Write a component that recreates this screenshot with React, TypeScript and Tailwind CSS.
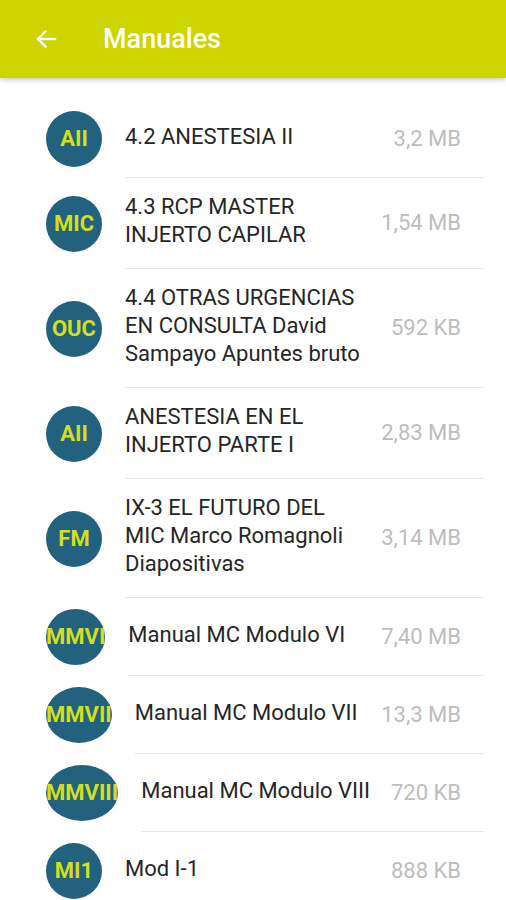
import React from "react";

type Manual = {
  initials: string;
  title: string;
  size: string;
};

const MANUALS: Manual[] = [
  { initials: "AII", title: "4.2 ANESTESIA II", size: "3,2 MB" },
  { initials: "MIC", title: "4.3 RCP MASTER INJERTO CAPILAR", size: "1,54 MB" },
  { initials: "OUC", title: "4.4 OTRAS URGENCIAS EN CONSULTA David Sampayo Apuntes bruto", size: "592 KB" },
  { initials: "AII", title: "ANESTESIA EN EL INJERTO PARTE I", size: "2,83 MB" },
  { initials: "FM", title: "IX-3 EL FUTURO DEL MIC Marco Romagnoli Diapositivas", size: "3,14 MB" },
  { initials: "MMVI", title: "Manual MC Modulo VI", size: "7,40 MB" },
  { initials: "MMVII", title: "Manual MC Modulo VII", size: "13,3 MB" },
  { initials: "MMVIII", title: "Manual MC Modulo VIII", size: "720 KB" },
  { initials: "MI1", title: "Mod I-1", size: "888 KB" },
];

function BackArrow() {
  return (
    <svg width="24" height="24" viewBox="0 0 24 24" fill="none" stroke="white" strokeWidth="2.4" strokeLinecap="square">
      <path d="M21 12H4" />
      <path d="M11.5 4.5L4 12l7.5 7.5" />
    </svg>
  );
}

function ManualRow({ item }: { item: Manual }) {
  return (
    <div className="mr-[22px] flex pl-[46px]">
      <div className="flex h-[56px] min-w-[56px] shrink-0 items-center justify-center self-center rounded-[50%] bg-[#23627f] text-[22px] font-bold leading-none text-[#d3df1c]">
        {item.initials}
      </div>
      <div className="ml-[23px] flex min-h-[78px] flex-1 items-center border-b border-[#e6e6e6] py-[17px] pr-[23px]">
        <div className="flex-1 -translate-y-[2px] text-[22px] leading-[28px] text-[#262626]">{item.title}</div>
        <div className="ml-4 shrink-0 text-right text-[22px] leading-[28px] text-[#bdbdbd]">{item.size}</div>
      </div>
    </div>
  );
}

export default function App() {
  return (
    <div className="h-[900px] w-[506px] overflow-hidden bg-white" style={{ fontFamily: "Roboto, 'Noto Sans', sans-serif" }}>
      <header className="relative z-10 flex h-[78px] items-center bg-[#cdd400] pl-[34px] shadow-[0_2px_5px_rgba(0,0,0,0.22)]">
        <BackArrow />
        <h1 className="ml-[45px] text-[27px] font-medium text-white">Manuales</h1>
      </header>
      <div className="pt-[22px]">
        {MANUALS.map((m, i) => (
          <ManualRow key={i} item={m} />
        ))}
      </div>
    </div>
  );
}
